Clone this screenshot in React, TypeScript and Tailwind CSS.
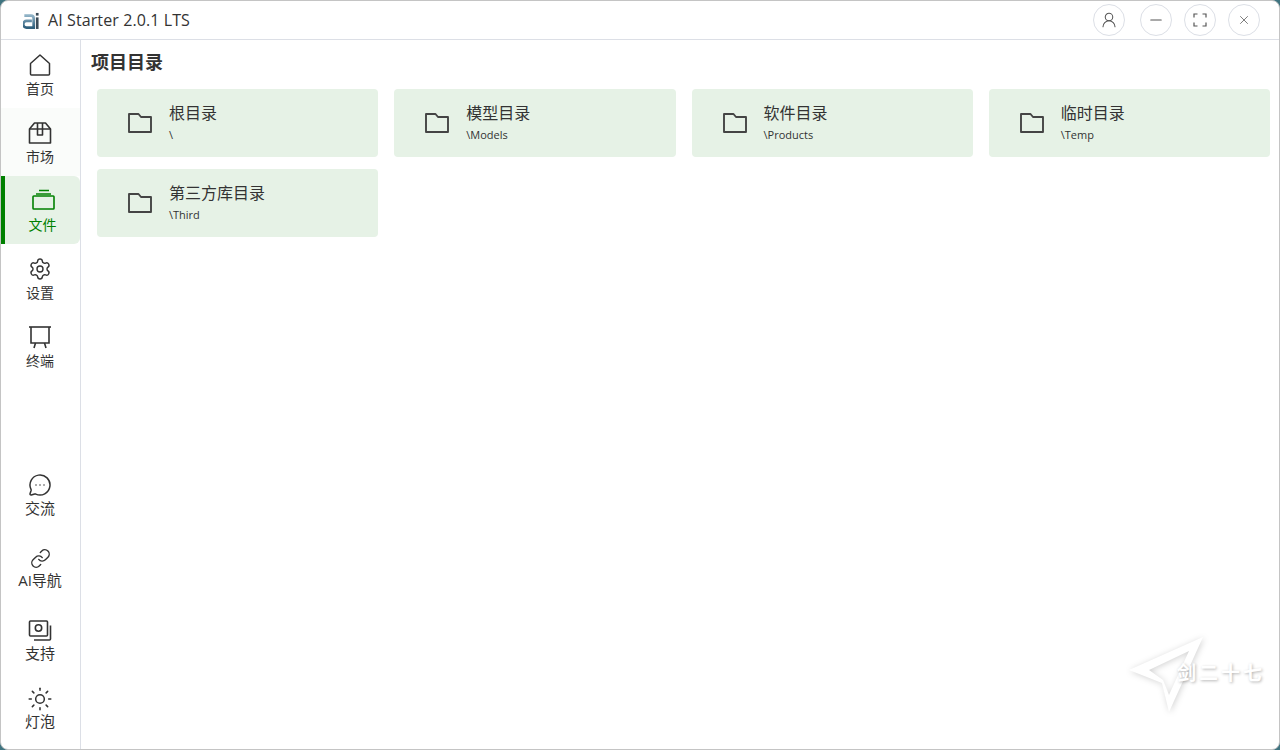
import { ReactNode } from "react";
import { Settings, MessageCircleMore, Link, Sun, UserRound, Minus, X } from "lucide-react";

const ui = "font-['Open_Sans','Noto_Sans_CJK_SC',sans-serif]";

const HomeIcon = () => (
  <svg width="24" height="24" viewBox="0 0 24 24" fill="none" stroke="currentColor" strokeWidth="1.5" strokeLinejoin="round">
    <path d="M12 2 21.5 10.5V21a1 1 0 0 1-1 1h-17a1 1 0 0 1-1-1V10.5z" />
  </svg>
);

const MarketIcon = () => (
  <svg width="24" height="24" viewBox="0 0 24 24" fill="none" stroke="currentColor" strokeWidth="1.6" strokeLinejoin="round">
    <path d="M1.5 8 6.5 2h11l5 6v14h-21z" />
    <path d="M1.5 8h21" />
    <path d="M9.5 2v12h5V2" />
  </svg>
);

const FilesIcon = () => (
  <svg width="24" height="24" viewBox="0 0 24 24" fill="none" stroke="currentColor" strokeWidth="1.6">
    <rect x="2" y="7" width="21" height="13" rx="0.8" />
    <path d="M5 5h15M8 1.5h10" />
  </svg>
);

const BoardIcon = () => (
  <svg width="24" height="24" viewBox="0 0 24 24" fill="none" stroke="currentColor" strokeWidth="1.6">
    <path d="M1 2h22" />
    <path d="M3 2v16h18V2" />
    <path d="M7.5 18 6 23M16.5 18l1.5 5" />
  </svg>
);

const SupportIcon = () => (
  <svg width="24" height="24" viewBox="0 0 24 24" fill="none" stroke="currentColor" strokeWidth="1.6">
    <rect x="1.5" y="2" width="18" height="15" rx="1" />
    <circle cx="10.5" cy="9" r="3.2" />
    <path d="M22.5 6.5V20a1 1 0 0 1-1 1H6" />
  </svg>
);

const FullscreenIcon = () => (
  <svg width="14" height="14" viewBox="0 0 14 14" fill="none" stroke="currentColor" strokeWidth="1.2">
    <path d="M1 4.5V1h3.5M9.5 1H13v3.5M13 9.5V13H9.5M4.5 13H1V9.5" />
  </svg>
);

const FolderIcon = () => (
  <svg width="24" height="20" viewBox="0 0 24 20" fill="none" stroke="#444" strokeWidth="1.9" strokeLinejoin="round">
    <path d="M1 1h9.5L13 4h10v15H1z" />
  </svg>
);

const Logo = () => (
  <svg width="16" height="17" viewBox="0 0 18 19">
    <defs>
      <linearGradient id="logo-a" x1="0" y1="0" x2="0" y2="1">
        <stop offset="0" stopColor="#8fb2c6" />
        <stop offset="1" stopColor="#2f5f7c" />
      </linearGradient>
    </defs>
    <path d="M1.5 4h7.5a3 3 0 0 1 3 3v10.500H4a3.6 3.6 0 0 1 0-7.500h6" fill="none" stroke="url(#logo-a)" strokeWidth="3" />
    <rect x="14.500" y="6" width="3" height="13" fill="#3c4c58" />
    <rect x="14.500" y="1" width="3" height="3" fill="#3c4c58" />
  </svg>
);

const NavItem = ({ icon, label, className = "", gap = "mt-[3px]" }: { icon: ReactNode; label: string; className?: string; gap?: string }) => (
  <div className={`flex flex-col items-center pr-px text-[#333] ${className}`}>
    {icon}
    <span className={`leading-[18px] ${gap}`}>{label}</span>
  </div>
);

const RoundBtn = ({ children }: { children: ReactNode }) => (
  <button className="w-8 h-8 rounded-full border border-[#dcdfe6] flex items-center justify-center text-[#555]">
    {children}
  </button>
);

const folders = [
  { name: "根目录", path: "\\" },
  { name: "模型目录", path: "\\Models" },
  { name: "软件目录", path: "\\Products" },
  { name: "临时目录", path: "\\Temp" },
  { name: "第三方库目录", path: "\\Third" },
];

const FolderCard = ({ name, path }: { name: string; path: string }) => (
  <div className="h-[68px] rounded bg-[#e6f2e6] flex items-center pl-[31px]">
    <FolderIcon />
    <div className="ml-[17px] pb-[2px] flex flex-col text-[#333]">
      <span className="text-base leading-[22px]">{name}</span>
      <span className="text-[11px] leading-4 mt-[3px]">{path}</span>
    </div>
  </div>
);

export default function App() {
  return (
    <div className={`w-[1280px] h-[750px] bg-[#3f7480] overflow-hidden ${ui}`}>
      <div className="relative w-full h-full bg-white rounded-lg border border-[#c4c4c4] flex flex-col overflow-hidden">
        {/* title bar */}
        <div className="h-[39px] shrink-0 border-b border-[#dcdfe6] flex items-center pl-[22px] pr-[19px]">
          <Logo />
          <span className="ml-[9px] text-base tracking-[0.1px] text-[#333]">AI Starter 2.0.1 LTS</span>
          <div className="ml-auto flex gap-[12px]">
            <div className="mr-[3px]"><RoundBtn><UserRound size={18} strokeWidth={1.4} /></RoundBtn></div>
            <RoundBtn><Minus size={18} strokeWidth={1.4} /></RoundBtn>
            <RoundBtn><FullscreenIcon /></RoundBtn>
            <RoundBtn><X size={14} strokeWidth={1.3} /></RoundBtn>
          </div>
        </div>

        <div className="flex-1 flex min-h-0">
          {/* side nav */}
          <div className="w-[80px] shrink-0 border-r border-[#dcdfe6] flex flex-col">
            <NavItem className="h-[68px] pt-[13px] text-sm" icon={<HomeIcon />} label="首页" />
            <NavItem className="h-[68px] pt-[13px] text-sm bg-[#fafcfa]" icon={<MarketIcon />} label="市场" />
            <div className="h-[68px] pt-[13px] flex flex-col items-center text-sm rounded-r-md bg-[#e6f2e6] border-l-[4px] border-[#008000] text-[#008000]">
              <FilesIcon />
              <span className="leading-[18px] mt-[3px]">文件</span>
            </div>
            <NavItem className="h-[68px] pt-[13px] text-sm" icon={<Settings size={24} strokeWidth={1.4} />} label="设置" />
            <NavItem className="h-[68px] pt-[13px] text-sm" icon={<BoardIcon />} label="终端" />

            <div className="mt-auto flex flex-col pb-[18px] text-[15px]">
              <NavItem className="h-[73px]" gap="mt-[2px]" icon={<MessageCircleMore size={24} strokeWidth={1.5} />} label="交流" />
              <NavItem className="h-[73px]" gap="mt-[1px]" icon={<Link size={21} strokeWidth={1.6} className="my-[1.5px]" />} label="AI导航" />
              <NavItem className="h-[68px]" gap="mt-[1px]" icon={<SupportIcon />} label="支持" />
              <NavItem className="h-[44px]" gap="mt-[1px]" icon={<Sun size={26} strokeWidth={1.4} className="-my-px" />} label="灯泡" />
            </div>
          </div>

          {/* main */}
          <div className="flex-1 pl-[10px] pr-[9px] pt-[9px]">
            <h1 className="text-lg leading-[26px] font-bold text-[#333]">项目目录</h1>
            <div className="mt-[14px] ml-[6px] grid grid-cols-4 gap-x-4 gap-y-3">
              {folders.map((f) => (
                <FolderCard key={f.path} name={f.name} path={f.path} />
              ))}
            </div>
          </div>
        </div>

        {/* watermark */}
        <div className="absolute right-0 bottom-[32px] w-[150px] h-[80px] pointer-events-none">
          <svg width="80" height="80" viewBox="0 0 80 80" className="absolute left-0 top-0 drop-shadow-[1px_1px_3px_rgba(0,0,0,0.18)]">
            <path d="M0 33 74 0 40 75 33 46Z M20 33 34 43 40 58 60 14Z" fill="#fff" fillRule="evenodd" />
          </svg>
          <span className="absolute left-[48px] top-[24px] text-[19px] leading-6 tracking-[3px] font-bold text-white [text-shadow:1px_1px_3px_rgba(0,0,0,0.3)] whitespace-nowrap">剑二十七</span>
        </div>
      </div>
    </div>
  );
}
